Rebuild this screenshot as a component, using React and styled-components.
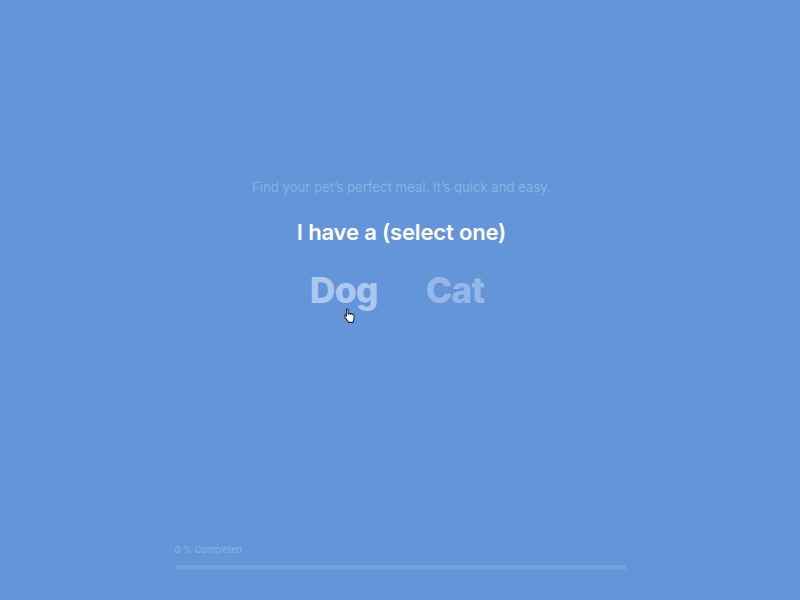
import * as React from 'react';
import styled, { createGlobalStyle } from 'styled-components';

const GlobalStyle = createGlobalStyle`
  html, body {
    margin: 0;
    padding: 0;
    background-color: #6495d9;
  }
`
const Page = styled.div`
  box-sizing: border-box;
  width: 800px;
  height: 600px;
  padding-top: 179px;
  display: flex;
  flex-direction: column;
  align-items: center;
  background-color: #6495d9;
  font-family: Inter, "Liberation Sans", sans-serif;
`
const Tagline = styled.p`
  margin: 0 0 0 3px;
  font-size: 13.15px;
  line-height: 16px;
  font-weight: 400;
  color: #89b0e6;
`
const Question = styled.h1`
  margin: 21px 0 0 3px;
  font-size: 22.1px;
  line-height: 32px;
  font-weight: 600;
  letter-spacing: -0.2px;
  color: #ffffff;
`
const Choices = styled.div`
  margin-top: 21px;
  padding-right: 6px;
  display: flex;
  gap: 48px;
`
const Choice = styled.button`
  position: relative;
  margin: 0;
  padding: 0;
  border: 0;
  background: transparent;
  font-family: inherit;
  font-size: 35.5px;
  line-height: 44px;
  font-weight: 800;
  letter-spacing: -0.8px;
  color: ${props => props.$hover ? '#aac7ef' : '#95b7ea'};
  cursor: pointer;
`
const Cursor = styled.svg`
  position: absolute;
  left: 33px;
  top: 39px;
  width: 14px;
  height: 17px;
`
const Progress = styled.div`
  margin-top: auto;
  margin-bottom: 30px;
  width: 451px;
`
const ProgressLabel = styled.div`
  font-size: 9.2px;
  line-height: 12px;
  color: #8bb1e6;
  margin-bottom: 9px;
`
const ProgressTrack = styled.div`
  height: 5px;
  background-color: #739fde;
`

function App() {
  return (
    <Page>
      <GlobalStyle />
      <Tagline>Find your pet’s perfect meal. It’s quick and easy.</Tagline>
      <Question>I have a (select one)</Question>
      <Choices>
        <Choice $hover>
          Dog
          <Cursor viewBox="0 0 13 16">
            <path
              d="M3.2 1.6c0-.9 1.6-.9 1.6 0v4.2l.4-.1c.3-1 1.6-.8 1.7.1.4-.8 1.6-.6 1.7.3.5-.6 1.6-.3 1.7.6.1 1.5.2 3-.3 4.4-.3.9-.6 1.6-.6 2.4H4.9c-.2-1-.8-1.6-1.5-2.5L1.2 8c-.5-.9.5-1.7 1.3-1l.7.8z"
              fill="#ffffff"
              stroke="#1f2a44"
              strokeWidth="1"
              strokeLinejoin="round"
            />
          </Cursor>
        </Choice>
        <Choice>Cat</Choice>
      </Choices>
      <Progress>
        <ProgressLabel>0 % Completed</ProgressLabel>
        <ProgressTrack />
      </Progress>
    </Page>
  );
}

export default App;
